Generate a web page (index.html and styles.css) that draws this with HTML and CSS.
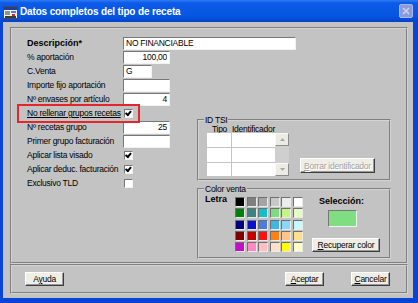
FILE: index.html
```html
<!DOCTYPE html>
<html lang="es">
<head>
    <meta charset="UTF-8">
    <meta name="viewport" content="width=device-width, initial-scale=1.0">
    <title>Datos completos del tipo de receta</title>
    <link rel="stylesheet" href="styles.css">
</head>
<body>

<div class="window">
    <div class="titlebar">
        <svg class="app-icon" width="15" height="13" viewBox="0 0 15 13">
            <rect x="0.5" y="0.5" width="14" height="12" fill="#f2f2f2" stroke="#4a4a4a"/>
            <rect x="1" y="1" width="13" height="3" fill="#1d3f9e"/>
            <rect x="2" y="5" width="5" height="4" fill="#8a9a8a"/>
            <rect x="8" y="5" width="5" height="2" fill="#5c7cc8"/>
            <rect x="2" y="10" width="11" height="2" fill="#3a3a3a"/>
            <rect x="9" y="8" width="3" height="2" fill="#c0302c"/>
        </svg>
        <span class="title">Datos completos del tipo de receta</span>
        <span class="close">
            <svg width="8" height="8" viewBox="0 0 8 8">
                <path d="M1 1 L7 7 M7 1 L1 7" stroke="#c9d1f1" stroke-width="1.6"/>
            </svg>
        </span>
    </div>

    <div class="client">
        <div class="panel main-panel">
            <div class="form">
                <label class="bold">Descripción*</label>
                <input type="text" class="field wide" value="NO FINANCIABLE">

                <label>% aportación</label>
                <input type="text" class="field num" value="100,00">

                <label>C.Venta</label>
                <input type="text" class="field short" value="G">

                <label>Importe fijo aportación</label>
                <input type="text" class="field num" value="">

                <label>Nº envases por artículo</label>
                <input type="text" class="field num" value="4">

                <label class="link">No rellenar grupos recetas</label>
                <span class="check checked"></span>

                <label>Nº recetas grupo</label>
                <input type="text" class="field num" value="25">

                <label>Primer grupo facturación</label>
                <input type="text" class="field num" value="">

                <label>Aplicar lista visado</label>
                <span class="check checked"></span>

                <label>Aplicar deduc. facturación</label>
                <span class="check checked"></span>

                <label>Exclusivo TLD</label>
                <span class="check"></span>
            </div>

            <div class="side">
                <fieldset class="group tsi">
                    <legend>ID TSI</legend>
                    <div class="grid-head">
                        <span class="col-tipo">Tipo</span>
                        <span>Identificador</span>
                    </div>
                    <div class="tsi-body">
                        <div class="grid-wrap">
                            <div class="grid">
                                <span></span><span></span>
                                <span></span><span></span>
                                <span></span><span></span>
                            </div>
                            <div class="scrollbar">
                                <span class="sb-btn">
                                    <svg width="5" height="3" viewBox="0 0 5 3"><path d="M0 3 L2.5 0 L5 3 Z" fill="#a8a8a8"/></svg>
                                </span>
                                <span class="sb-track"></span>
                                <span class="sb-btn">
                                    <svg width="5" height="3" viewBox="0 0 5 3"><path d="M0 0 L2.5 3 L5 0 Z" fill="#a8a8a8"/></svg>
                                </span>
                            </div>
                        </div>
                        <button class="btn disabled borrar" disabled><u>B</u>orrar identificador</button>
                    </div>
                </fieldset>

                <fieldset class="group color">
                    <legend>Color venta</legend>
                    <div class="color-body">
                        <span class="bold letra">Letra</span>
                        <div class="palette">
                            <span style="background:#000000"></span>
                            <span style="background:#7f7f7f"></span>
                            <span style="background:#a4a4a4"></span>
                            <span style="background:#c8c8c8"></span>
                            <span style="background:#ececec"></span>
                            <span style="background:#ffffff"></span>

                            <span style="background:#007f0e"></span>
                            <span style="background:#3f8282"></span>
                            <span style="background:#12c0c6"></span>
                            <span style="background:#7ddc7d"></span>
                            <span style="background:#c4f582"></span>
                            <span style="background:#e4fcc4"></span>

                            <span style="background:#00007e"></span>
                            <span style="background:#0a10cc"></span>
                            <span style="background:#4b7ae0"></span>
                            <span style="background:#3cb8e2"></span>
                            <span style="background:#8ad8f8"></span>
                            <span style="background:#c8f8ff"></span>

                            <span style="background:#800000"></span>
                            <span style="background:#c40000"></span>
                            <span style="background:#ff1010"></span>
                            <span style="background:#ff8010"></span>
                            <span style="background:#ffc488"></span>
                            <span style="background:#ffe08a"></span>

                            <span style="background:#c210c8"></span>
                            <span style="background:#ff88c4"></span>
                            <span style="background:#ffc0c4"></span>
                            <span style="background:#fde0c8"></span>
                            <span style="background:#ffff00"></span>
                            <span style="background:#ffffc4"></span>
                        </div>
                        <div class="selection">
                            <span class="bold sel-label">Selección:</span>
                            <span class="swatch"></span>
                            <button class="btn recuperar"><u>R</u>ecuperar color</button>
                        </div>
                    </div>
                </fieldset>
            </div>

            <div class="highlight"></div>
        </div>

        <div class="panel footer">
            <button class="btn">A<u>y</u>uda</button>
            <span class="spacer"></span>
            <button class="btn"><u>A</u>ceptar</button>
            <button class="btn cancel"><u>C</u>ancelar</button>
        </div>
    </div>
</div>

</body>
</html>
```

FILE: styles.css
```css
body {
    margin: 0;
    background: #c3c3c3;
}
.window {
    width: 418px;
    height: 303px;
    display: flex;
    flex-direction: column;
    font-family: "Liberation Sans", Arial, sans-serif;
    font-size: 8.5px;
    letter-spacing: -0.25px;
    color: #000;
}
.titlebar {
    height: 22px;
    flex: none;
    display: flex;
    align-items: center;
    padding: 0 5px 0 3px;
    box-sizing: border-box;
    background: linear-gradient(#2f7bf2 0, #0c5be8 3px, #0656e2 16px, #0443c9 22px);
}
.app-icon {
    flex: none;
    margin-top: 2px;
}
.title {
    flex: 1;
    margin-left: 2px;
    color: #fff;
    font-size: 10px;
    font-weight: bold;
    letter-spacing: -0.15px;
}
.close {
    width: 14px;
    height: 14px;
    box-sizing: border-box;
    border: 1px solid #aab6ea;
    border-radius: 2px;
    background: #8a9bdc;
    display: flex;
    align-items: center;
    justify-content: center;
}
.client {
    flex: 1;
    display: flex;
    flex-direction: column;
    background: #c3c3c3;
    border: solid #0645d6;
    border-width: 0 5px 5px 3px;
    padding: 5px 5px 0 7px;
}
.panel {
    border: 2px groove #d4d4d4;
    box-sizing: border-box;
    width: 398px;
}
.main-panel {
    position: relative;
    height: 237px;
    display: flex;
    align-items: flex-start;
    padding: 7px 0 0 15px;
}
.bold {
    font-weight: bold;
    font-size: 9px;
    letter-spacing: 0;
}

/* left form */
.form {
    width: 170px;
    flex: none;
    display: grid;
    grid-template-columns: 96px 74px;
    grid-auto-rows: 14px;
    align-items: center;
}
.form label {
    white-space: nowrap;
}
.form .link {
    text-decoration: underline;
}
.field {
    height: 13px;
    box-sizing: border-box;
    border: 1px solid;
    border-color: #777 #f2f2f2 #f2f2f2 #777;
    background: #fff;
    padding: 0 2px;
    margin: 0;
    font: inherit;
    letter-spacing: inherit;
    color: #000;
    outline: none;
}
.field.wide {
    width: 173px;
}
.field.num {
    width: 47px;
    text-align: right;
}
.field.short {
    width: 29px;
}
.check {
    width: 9px;
    height: 9px;
    box-sizing: border-box;
    margin-left: 1px;
    border: 1px solid;
    border-color: #777 #f2f2f2 #f2f2f2 #777;
    background: #fff;
    position: relative;
}
.check.checked::after {
    content: "";
    position: absolute;
    left: 2px;
    top: 0;
    width: 2px;
    height: 4px;
    border: solid #000;
    border-width: 0 2px 2px 0;
    transform: rotate(40deg);
    transform-origin: 2px 2px;
}

/* right column */
.side {
    width: 194px;
    flex: none;
    margin-top: 79px;
}
.group {
    margin: 0;
    padding: 0 0 0 6px;
    border: 2px groove #d4d4d4;
    box-sizing: border-box;
    min-width: 0;
    width: 194px;
}
.group legend {
    margin-left: -1px;
    padding: 0 1px;
    line-height: 10px;
}
.tsi {
    height: 66px;
}
.grid-head {
    display: flex;
    height: 8px;
    line-height: 8px;
    margin-left: 2px;
}
.col-tipo {
    width: 25px;
    text-align: center;
}
.tsi-body {
    display: flex;
    align-items: flex-end;
    margin-left: 2px;
}
.grid-wrap {
    display: flex;
}
.grid {
    width: 68px;
    height: 43px;
    display: grid;
    grid-template-columns: 24px 43px;
    grid-template-rows: 14px 14px 13px;
    gap: 1px;
    background: #c4c4c4;
}
.grid span {
    background: #fff;
}
.scrollbar {
    width: 14px;
    height: 43px;
    display: flex;
    flex-direction: column;
    background: #cfcfcf;
}
.sb-btn {
    height: 13px;
    flex: none;
    box-sizing: border-box;
    border: 1px solid;
    border-color: #fafafa #8c8c8c #8c8c8c #fafafa;
    background: #ecebe4;
    display: flex;
    align-items: center;
    justify-content: center;
}
.sb-track {
    flex: 1;
}
.btn {
    height: 14px;
    width: 39px;
    box-sizing: border-box;
    padding: 0;
    margin: 0;
    border: 1px solid;
    border-color: #fff #3c3c3c #3c3c3c #fff;
    box-shadow: inset -1px -1px 0 #9a9a9a;
    background: #efeee6;
    font: inherit;
    letter-spacing: inherit;
    color: #000;
}
.btn.disabled {
    color: #a3a3a3;
    text-shadow: 1px 1px 0 #fff;
}
.borrar {
    width: 75px;
    height: 15px;
    margin: 0 0 3px 11px;
}

.color {
    height: 75px;
    margin-top: 3px;
}
.color-body {
    display: flex;
    align-items: flex-start;
}
.letra {
    width: 30px;
    line-height: 10px;
    flex: none;
}
.palette {
    margin-top: 3px;
    display: grid;
    grid-template-columns: repeat(6, 10px);
    grid-auto-rows: 10px;
    column-gap: 1.6px;
    row-gap: 1.25px;
}
.palette span {
    box-sizing: border-box;
    border: 1px solid;
    border-color: #6f6f6f #eaeaea #eaeaea #6f6f6f;
}
.selection {
    margin-left: 9px;
    display: flex;
    flex-direction: column;
    align-items: flex-start;
}
.sel-label {
    margin: 2px 0 0 7px;
    line-height: 10px;
}
.swatch {
    width: 29px;
    height: 17px;
    margin: 4px 0 0 16px;
    box-sizing: border-box;
    border: 1px solid;
    border-color: #777 #f2f2f2 #f2f2f2 #777;
    background: #7fde7f;
}
.recuperar {
    width: 68px;
    margin-top: 11px;
}

/* red annotation box */
.highlight {
    position: absolute;
    left: 5px;
    top: 75px;
    width: 123px;
    height: 19px;
    box-sizing: border-box;
    border: 2px solid #e3262b;
}

.footer {
    height: 30px;
    margin-top: 0;
    display: flex;
    align-items: flex-start;
    padding: 6px 16px 0 13px;
}
.spacer {
    flex: 1;
}
.cancel {
    margin-left: 27px;
}
```
